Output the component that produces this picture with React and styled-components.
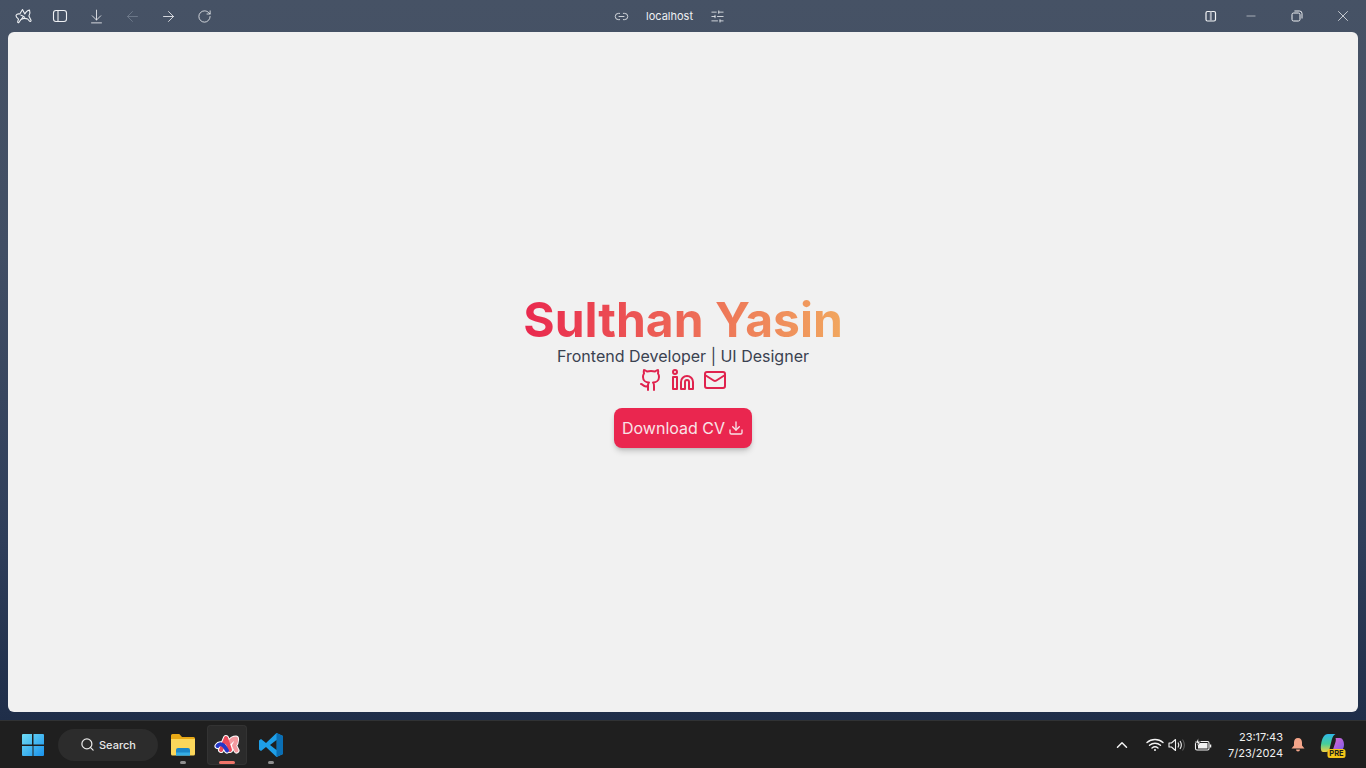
import React from "react";
import styled, { createGlobalStyle } from "styled-components";
import {
  ArrowDownToLine,
  ArrowLeft,
  ArrowRight,
  Download,
  Github,
  Link2,
  Linkedin,
  Mail,
  RotateCw,
  Search,
  SlidersHorizontal,
  X,
  Minus,
  ChevronUp,
} from "lucide-react";

const GlobalStyle = createGlobalStyle`
  html, body { margin: 0; padding: 0; height: 100%; }
  body { font-family: Inter, "Liberation Sans", sans-serif; overflow: hidden; background: #1f1f1f; }
  #root { height: 100%; }
`;

const Screen = styled.div`
  width: 1366px;
  height: 768px;
  display: flex;
  flex-direction: column;
`;

const BrowserWindow = styled.div`
  height: 720px;
  display: flex;
  flex-direction: column;
  background: linear-gradient(180deg, #465265 0%, #414e64 35%, #2f3e5a 75%, #1f2e49 100%);
`;

const Toolbar = styled.div`
  height: 32px;
  display: flex;
  align-items: center;
  padding-left: 6px;
`;

const ToolGroup = styled.div`
  display: flex;
  align-items: center;
`;

const ToolButton = styled.div`
  width: ${(p) => p.$w || 36}px;
  height: 32px;
  display: flex;
  align-items: center;
  justify-content: center;
  color: ${(p) => (p.$dim ? "#737e8f" : "#eef0f3")};
`;

const AddressBar = styled.div`
  display: flex;
  align-items: center;
  margin-left: 392px;
  color: #eef0f3;
`;

const Host = styled.span`
  width: 48px;
  margin: 0 16.5px;
  text-align: center;
  font-size: 11px;
  white-space: nowrap;
`;

const WindowControls = styled.div`
  margin-left: auto;
  display: flex;
  align-items: center;
`;

const Page = styled.main`
  height: 680px;
  margin: 0 8px;
  background: #f1f1f1;
  border-radius: 6px;
  display: flex;
  flex-direction: column;
  align-items: center;
  justify-content: center;
`;

const Name = styled.h1`
  margin: 0;
  font-size: 48px;
  line-height: 48px;
  font-weight: 700;
  background: linear-gradient(90deg, #e9284e, #f1a75f);
  -webkit-background-clip: text;
  background-clip: text;
  color: transparent;
`;

const Role = styled.p`
  margin: 0;
  font-size: 16px;
  line-height: 24px;
  font-weight: 400;
  color: #3a4250;
`;

const Socials = styled.div`
  display: flex;
  gap: 8px;
  color: #e0234e;
  height: 24px;
`;

const CvButton = styled.button`
  margin-top: 16px;
  height: 40px;
  width: 138px;
  padding: 0;
  border: none;
  border-radius: 8px;
  background: #ea264f;
  color: #f8e3e7;
  font-family: inherit;
  font-size: 16px;
  display: flex;
  align-items: center;
  justify-content: center;
  gap: 3px;
  box-shadow: 0 4px 6px -1px rgba(0, 0, 0, 0.18), 0 2px 4px -2px rgba(0, 0, 0, 0.18);
`;

const Taskbar = styled.footer`
  height: 48px;
  display: flex;
  align-items: center;
  background: #1f1f1f;
  border-top: 1px solid #303234;
  box-sizing: border-box;
  padding-left: 20px;
  color: #fff;
`;

const SearchPill = styled.div`
  width: 100px;
  height: 32px;
  margin-left: 12px;
  border-radius: 16px;
  background: #2c2c2c;
  display: flex;
  align-items: center;
  padding-left: 22px;
  box-sizing: border-box;
  gap: 4px;
  font-size: 11px;
  font-weight: 500;
  color: #e8e8e8;
`;

const TaskApps = styled.div`
  display: flex;
  margin-left: 5px;
  gap: 4px;
`;

const TaskApp = styled.div`
  position: relative;
  width: 40px;
  height: 40px;
  display: flex;
  align-items: center;
  justify-content: center;
  border-radius: 4px;
  background: ${(p) => (p.$active ? "#2b2b2b" : "transparent")};
  box-shadow: ${(p) => (p.$active ? "inset 0 0 0 1px #333" : "none")};
`;

const AppDot = styled.span`
  position: absolute;
  bottom: 1px;
  left: 50%;
  transform: translateX(-50%);
  height: 3px;
  border-radius: 2px;
  width: ${(p) => (p.$active ? 16 : 6)}px;
  background: ${(p) => (p.$active ? "#f0756a" : "#8f8f8f")};
`;

const Tray = styled.div`
  margin-left: auto;
  display: flex;
  align-items: center;
  color: #f2f2f2;
  padding-right: 13px;
`;

const TrayIcon = styled.div`
  width: ${(p) => p.$w}px;
  margin-right: ${(p) => p.$after || 0}px;
  flex: none;
  display: flex;
  justify-content: center;
`;

const Clock = styled.div`
  width: 62px;
  margin-left: 3px;
  text-align: right;
  font-size: 11px;
  line-height: 16px;
  color: #f0f0f0;
`;

const LogoMark = () => (
  <svg width="18" height="16" viewBox="0 0 18 16" fill="none" stroke="#eef0f3" strokeWidth="1.1" strokeLinejoin="round">
    <path d="M7.500 1.500 9.800 6c.8-1.800 2.300-3.500 4.700-4 .8 2 .5 4-.6 6l2.100 4.200c.4.900-.8 1.700-1.500 1L12.700 11c-2.200-.9-4.500-.8-6.700.4l-2 2.900c-.6.700-1.600.2-1.300-.7l.8-2.500C2.500 10.400 1 9.200 1 7.800c0-1.300 1.700-2.300 3.800-1.800Z" />
    <path d="M5.500 7c1.500.4 3 1.200 4.400 2.500M8 9 6.500 11" />
  </svg>
);

const PanelIcon = () => (
  <svg width="16" height="14" viewBox="0 0 16 14" fill="none" stroke="currentColor" strokeWidth="1.1">
    <rect x="1.500" y="1.500" width="13" height="11" rx="2.500" />
    <path d="M6 1.500v11" />
  </svg>
);

const SplitIcon = () => (
  <svg width="12" height="12" viewBox="0 0 12 12" fill="none" stroke="#f2f3f5" strokeWidth="1.200">
    <rect x="1" y="1.500" width="9.500" height="9.500" rx="1.500" />
    <path d="M5.800 1.500v9.500" strokeWidth="2" stroke="#aab0ba" />
  </svg>
);

const RestoreIcon = () => (
  <svg width="12" height="12" viewBox="0 0 12 12" fill="none" stroke="#eef0f3" strokeWidth="1">
    <rect x="1" y="3" width="8" height="8" rx="1.600" />
    <path d="M3.400 1h5.100A2.500 2.500 0 0 1 11 3.500v5" />
  </svg>
);

const WindowsLogo = () => (
  <svg width="26" height="26" viewBox="0 0 26 26">
    <defs>
      <linearGradient id="win" x1="0" y1="0" x2="1" y2="1">
        <stop offset="0" stopColor="#6fdcf5" />
        <stop offset="1" stopColor="#1a92ec" />
      </linearGradient>
    </defs>
    <path fill="url(#win)" d="M2 3a1 1 0 0 1 1-1h9v10.500H2ZM13.500 2H23a1 1 0 0 1 1 1v9.500H13.500ZM2 14h10.500v10H3a1 1 0 0 1-1-1ZM13.500 14H24v9a1 1 0 0 1-1 1h-9.500Z" />
  </svg>
);

const FolderIcon = () => (
  <svg width="26" height="26" viewBox="0 0 26 26">
    <path fill="#e8a916" d="M1 3.500A1.500 1.500 0 0 1 2.500 2h6.800l2.700 3h11.500A1.500 1.500 0 0 1 25 6.500V10H1Z" />
    <path fill="#fbd75b" d="M1 7h24v15a1.500 1.500 0 0 1-1.500 1.500h-21A1.500 1.500 0 0 1 1 22Z" />
    <path fill="#1a86c8" d="M6 18a2 2 0 0 1 2-2h10a2 2 0 0 1 2 2v5.500H6Z" />
    <path fill="#35aee6" d="M6 20.500h14v3H6Z" />
  </svg>
);

const ARC_BLUE = "M3.500 12c1.500-2 4-2.200 6-.5 2 1.800 2.500 3.500 3.500 5";
const ARC_RED = "M7 16 12 4l4 12";
const ARC_PINK = "M16 8c1.500-2.200 3.500-3.500 6-3.500.3 2.500-.4 5-2 7l2.500 5";

const ArcIcon = () => (
  <svg width="26" height="22" viewBox="0 0 26 22" fill="none" strokeLinecap="round" strokeLinejoin="round">
    <path d={ARC_PINK} stroke="#fff" strokeWidth="6" />
    <path d={ARC_RED} stroke="#fff" strokeWidth="6" />
    <path d={ARC_BLUE} stroke="#fff" strokeWidth="6" />
    <path d={ARC_PINK} stroke="#f39aa0" strokeWidth="4" />
    <path d={ARC_RED} stroke="#ec4a5a" strokeWidth="4" />
    <path d={ARC_BLUE} stroke="#2436c8" strokeWidth="4" />
  </svg>
);

const CodeIcon = () => (
  <svg width="26" height="26" viewBox="0 0 26 26">
    <path fill="#1e9fe8" d="M18.500 1 25 4v18l-6.500 3L8 15l-5 4-2-1.500V8.500L3 7l5 4Z" />
    <path fill="#0a6fb5" d="M18.500 1 25 4v18l-6.500 3Z" />
    <path fill="#1f1f1f" d="M18.500 8v10L12 13Z" />
  </svg>
);

const WifiIcon = () => (
  <svg width="18" height="14" viewBox="0 0 18 14" fill="none" stroke="#f4f4f4" strokeWidth="1.400" strokeLinecap="round">
    <path d="M1 4.500C5.500.5 12.500.5 17 4.500" />
    <path d="M3.500 7.300c3.200-2.700 7.800-2.700 11 0" />
    <path d="M6 10c1.800-1.400 4.200-1.400 6 0" />
    <circle cx="9" cy="12" r="1" fill="#f4f4f4" stroke="none" />
  </svg>
);

const SpeakerIcon = () => (
  <svg width="18" height="14" viewBox="0 0 18 14" fill="none" stroke="#f0f0f0" strokeWidth="1.100" strokeLinejoin="round">
    <path d="M1 5h2.500L7.500 1.500v11L3.500 9H1Z" />
    <path d="M10 4.500c1 1.500 1 3.500 0 5M12 3c1.700 2.500 1.700 5.500 0 8" />
    <path d="M14.500 1.500c2.300 3.300 2.300 7.700 0 11" stroke="#5c5c5c" />
  </svg>
);

const BatteryIcon = () => (
  <svg width="18" height="14" viewBox="0 0 18 14" fill="none" stroke="#f2f2f2" strokeWidth="1.100">
    <rect x="1.500" y="3.500" width="13.500" height="8.500" rx="1.500" />
    <rect x="4" y="5" width="9.500" height="5.500" fill="#f2f2f2" stroke="none" />
    <path d="M16.500 6.500v3" strokeWidth="1.500" />
    <path fill="#f2f2f2" stroke="#1f1f1f" strokeWidth=".6" d="M4.500 0 1.500 5h2L2.800 8.500 6.500 3.500h-2Z" />
  </svg>
);

const BellIcon = () => (
  <svg width="14" height="15" viewBox="0 0 14 15" fill="#f4a58a">
    <path d="M7 1c2.700 0 4 2 4 4.500v3l2.500 3H.5L3 8.500v-3C3 3 4.300 1 7 1Z" />
    <path d="M5 12.500h4a2 2 0 0 1-4 0Z" />
  </svg>
);

const CopilotIcon = () => (
  <svg width="28" height="28" viewBox="0 0 28 28">
    <defs>
      <linearGradient id="cpA" x1="0" y1="0" x2="0" y2="1">
        <stop offset="0" stopColor="#2fb7e8" />
        <stop offset="0.55" stopColor="#45cf9a" />
        <stop offset="1" stopColor="#f4d03f" />
      </linearGradient>
      <linearGradient id="cpB" x1="0" y1="0" x2="1" y2="1">
        <stop offset="0" stopColor="#e06ad0" />
        <stop offset="1" stopColor="#7a5ce8" />
      </linearGradient>
    </defs>
    <path fill="url(#cpA)" d="M2 14C3 7 5 3 9 3h7.500c-2 1-3 3-3.800 6l-2.200 9c-.5 2-1.500 3-3.500 3H4c-2 0-2.500-3.500-2-7Z" />
    <path fill="url(#cpB)" d="M16.500 7H21c2.500 0 4 3 4 6.500S23.500 20 21 20h-7.500l3-9c.4-1.500.5-3 0-4Z" />
    <rect x="8.500" y="18" width="18" height="9" rx="2.500" fill="#f5c518" />
    <text x="17.500" y="25.300" fontSize="7.500" fontWeight="700" fontFamily="Inter" textAnchor="middle" fill="#1c1c1c">PRE</text>
  </svg>
);

export default function App() {
  return (
    <Screen>
      <GlobalStyle />
      <BrowserWindow>
        <Toolbar>
          <ToolGroup>
            <ToolButton><LogoMark /></ToolButton>
            <ToolButton><PanelIcon /></ToolButton>
            <ToolButton><ArrowDownToLine size={17} strokeWidth={1.200} /></ToolButton>
            <ToolButton $dim><ArrowLeft size={17} strokeWidth={1.200} /></ToolButton>
            <ToolButton><ArrowRight size={17} strokeWidth={1.200} /></ToolButton>
            <ToolButton><RotateCw size={15} strokeWidth={1.300} /></ToolButton>
          </ToolGroup>
          <AddressBar>
            <Link2 size={15} strokeWidth={1.300} />
            <Host>localhost</Host>
            <SlidersHorizontal size={15} strokeWidth={1.300} />
          </AddressBar>
          <WindowControls>
            <ToolButton $w={34}><SplitIcon /></ToolButton>
            <ToolButton $w={46}><Minus size={14} strokeWidth={1} /></ToolButton>
            <ToolButton $w={46}><RestoreIcon /></ToolButton>
            <ToolButton $w={46}><X size={18} strokeWidth={1} /></ToolButton>
          </WindowControls>
        </Toolbar>
        <Page>
          <Name>Sulthan Yasin</Name>
          <Role>Frontend Developer | UI Designer</Role>
          <Socials>
            <Github size={24} />
            <Linkedin size={24} />
            <Mail size={24} />
          </Socials>
          <CvButton>
            Download CV
            <Download size={16} />
          </CvButton>
        </Page>
      </BrowserWindow>
      <Taskbar>
        <WindowsLogo />
        <SearchPill>
          <Search size={15} strokeWidth={2} />
          Search
        </SearchPill>
        <TaskApps>
          <TaskApp><FolderIcon /><AppDot /></TaskApp>
          <TaskApp $active><ArcIcon /><AppDot $active /></TaskApp>
          <TaskApp><CodeIcon /><AppDot /></TaskApp>
        </TaskApps>
        <Tray>
          <TrayIcon $w={20} $after={12}><ChevronUp size={18} strokeWidth={2} /></TrayIcon>
          <TrayIcon $w={22}><WifiIcon /></TrayIcon>
          <TrayIcon $w={22}><SpeakerIcon /></TrayIcon>
          <TrayIcon $w={30}><BatteryIcon /></TrayIcon>
          <Clock>23:17:43<br />7/23/2024</Clock>
          <TrayIcon $w={30}><BellIcon /></TrayIcon>
          <TrayIcon $w={40}><CopilotIcon /></TrayIcon>
        </Tray>
      </Taskbar>
    </Screen>
  );
}
